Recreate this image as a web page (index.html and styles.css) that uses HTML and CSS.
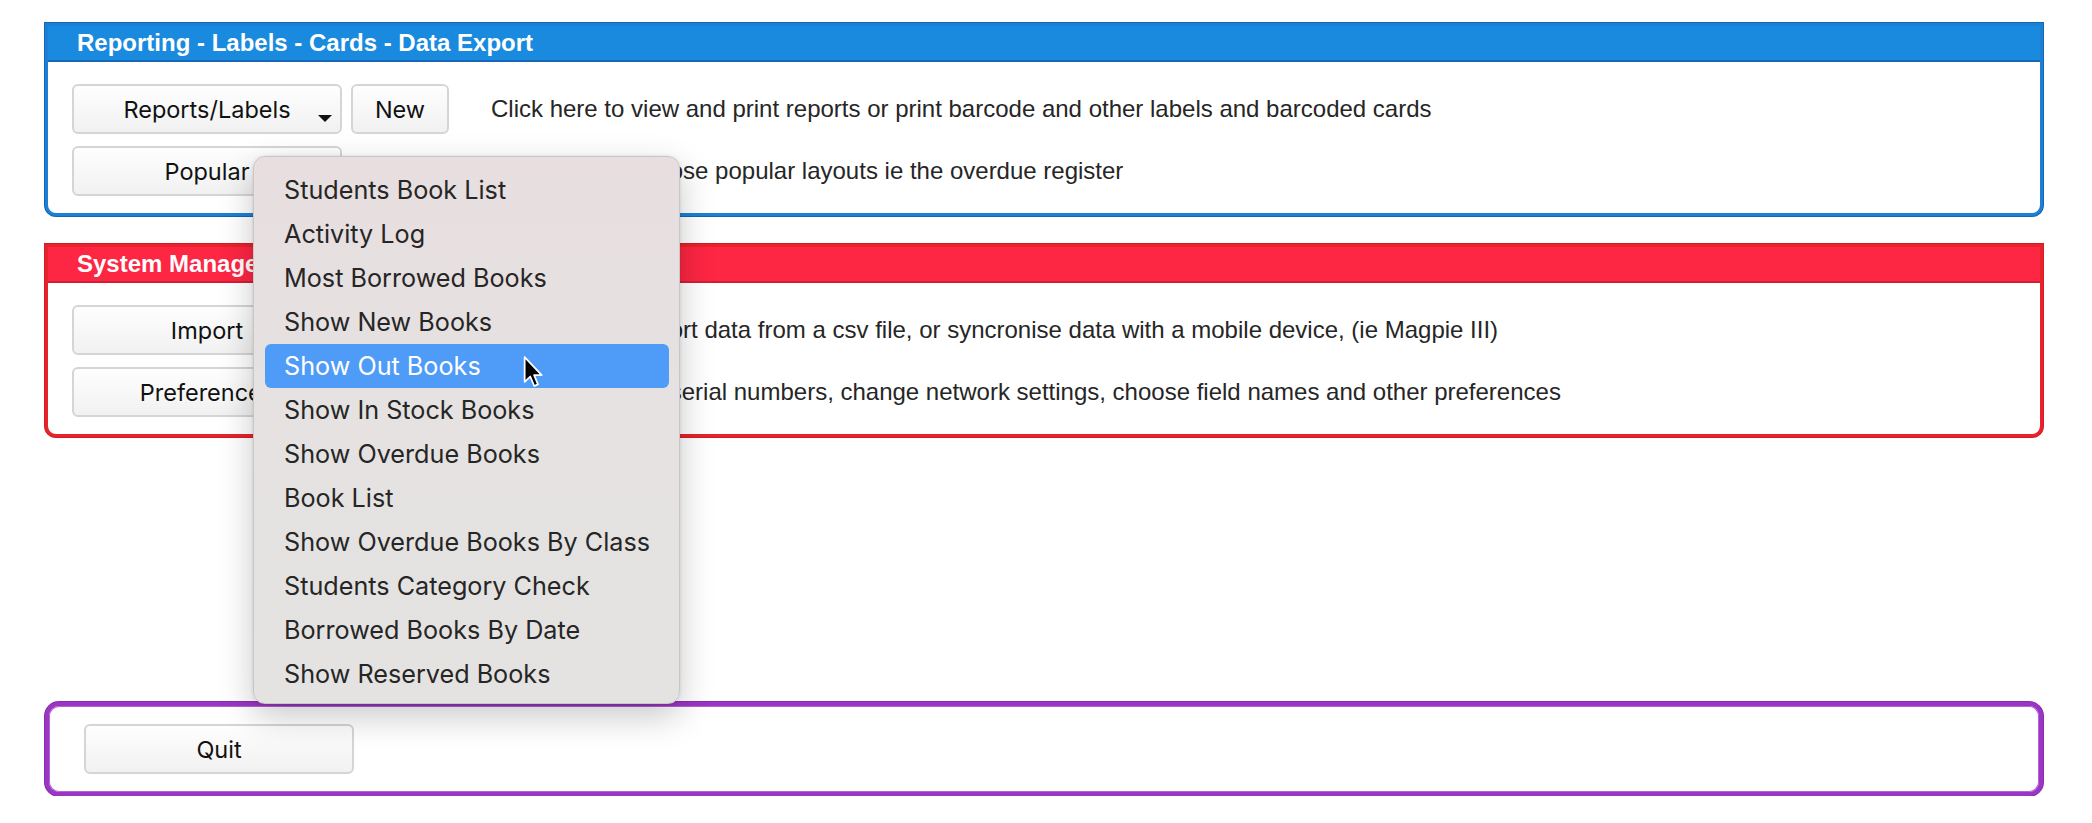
FILE: index.html
```html
<!DOCTYPE html>
<html>
<head>
    <title>Library - Reporting</title>
    <link rel="stylesheet" href="styles.css">
</head>
<body>
    <div class="page">
        <div class="panel blue">
            <div class="panel-head">Reporting - Labels - Cards - Data Export</div>
            <div class="panel-body">
                <div class="row">
                    <button class="btn wide drop">Reports/Labels<span class="caret"></span></button>
                    <button class="btn small">New</button>
                    <span class="desc">Click here to view and print reports or print barcode and other labels and barcoded cards</span>
                </div>
                <div class="row">
                    <button class="btn wide">Popular</button>
                    <span></span>
                    <span class="desc">Click here to choose popular layouts ie the overdue register</span>
                </div>
            </div>
        </div>

        <div class="panel red">
            <div class="panel-head">System Management</div>
            <div class="panel-body">
                <div class="row">
                    <button class="btn wide">Import</button>
                    <span></span>
                    <span class="desc">Click here to import data from a csv file, or syncronise data with a mobile device, (ie Magpie III)</span>
                </div>
                <div class="row">
                    <button class="btn wide">Preferences</button>
                    <span></span>
                    <span class="desc">Click here to set serial numbers, change network settings, choose field names and other preferences</span>
                </div>
            </div>
        </div>

        <div class="panel purple">
            <button class="btn wide">Quit</button>
        </div>
    </div>

    <!-- popup opened from the Popular button -->
    <div class="menu">
        <div class="menu-item">Students Book List</div>
        <div class="menu-item">Activity Log</div>
        <div class="menu-item">Most Borrowed Books</div>
        <div class="menu-item">Show New Books</div>
        <div class="menu-item active">Show Out Books</div>
        <div class="menu-item">Show In Stock Books</div>
        <div class="menu-item">Show Overdue Books</div>
        <div class="menu-item">Book List</div>
        <div class="menu-item">Show Overdue Books By Class</div>
        <div class="menu-item">Students Category Check</div>
        <div class="menu-item">Borrowed Books By Date</div>
        <div class="menu-item">Show Reserved Books</div>
    </div>

    <svg class="pointer" width="22" height="36" viewBox="0 0 20 32">
        <path d="M1.5 1.5 L1.5 24 L6.6 19.2 L10.2 27.8 L13.6 26.3 L10.1 17.9 L17 17.9 Z" fill="#000" stroke="#fff" stroke-width="1.6" stroke-linejoin="round"/>
    </svg>
</body>
</html>
```

FILE: styles.css
```css
body { margin: 0; background: #fff; font-family: "Liberation Sans", Arial, sans-serif; color: #222; }
.page { padding: 23px 49px 0 45px; display: flex; flex-direction: column; gap: 28px; }

.panel { border: 3px solid; border-radius: 0 0 11px 11px; background: #fff; }
.panel.blue { border-color: #1b80d6; box-shadow: 0 0 0 1px #1663ae; }
.panel.red { border-color: #e9222b; box-shadow: 0 0 0 1px #cf1d28; }
.panel.purple { margin-top: 237px; border: 4px solid #9a36c2; border-radius: 14px; box-shadow: 0 0 0 1px #8a2bb0, inset 0 0 0 1px #b462da; padding: 18px 35px; }

.panel-head { height: 34px; line-height: 34px; padding-left: 29px; color: #fff; font-weight: bold; font-size: 24px; border-bottom: 2px solid; }
.blue .panel-head { background: #1a8ade; border-bottom-color: #1667b5; }
.red .panel-head { background: #fd2643; border-bottom-color: #d41d33; }

.panel-body { padding: 22px 24px 17px; display: flex; flex-direction: column; gap: 12px; }
.row { display: grid; grid-template-columns: 270px 98px 1fr; column-gap: 9px; align-items: center; }
.desc { padding-left: 33px; font-size: 24px; color: #262626; white-space: nowrap; }

.btn { position: relative; height: 50px; border: 2px solid #d5d5d5; border-radius: 6px; background: linear-gradient(#fefefe, #f1f1f1); font-family: Inter, "Liberation Sans", sans-serif; font-size: 23.5px; color: #111; padding: 0; }
.btn.wide { width: 270px; }
.btn.small { width: 98px; }
.caret { position: absolute; right: 8px; bottom: 10px; width: 0; height: 0; border-left: 7px solid transparent; border-right: 7px solid transparent; border-top: 7px solid #111; }

.menu { position: absolute; left: 253px; top: 156px; width: 425px; height: 526px; padding: 11px 0 9px; background: linear-gradient(#e8dedf, #e5e2e1 45%, #e4e3e2); border: 1px solid #c9c6c6; border-radius: 12px; box-shadow: 0 12px 34px rgba(0,0,0,0.22), 0 0 3px rgba(0,0,0,0.12); }
.menu-item { height: 44px; line-height: 44px; margin: 0 10px 0 11px; padding-left: 19px; border-radius: 6px; font-family: Inter, "Noto Sans", sans-serif; font-size: 25.2px; color: #262626; }
.menu-item.active { background: #4f9bf8; color: #fff; }

.pointer { position: absolute; left: 523px; top: 355px; }
```
